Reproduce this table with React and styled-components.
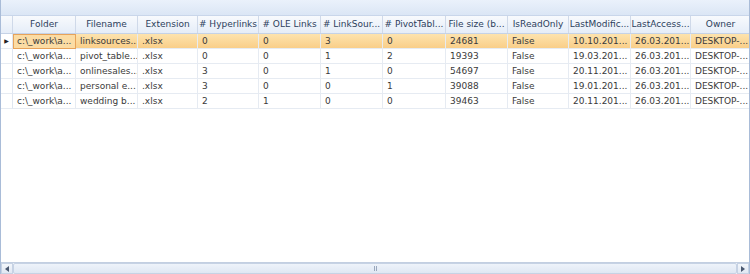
import React from 'react'
import styled, { createGlobalStyle } from 'styled-components'

const GlobalStyle = createGlobalStyle`
  html, body { margin: 0; padding: 0; background: #fff; }
  body { font-family: "DejaVu Sans", Tahoma, sans-serif; }
`

const COLS = '12px 63px 62px 60px 61px 62px 62px 63px 62px 61px 62px 60px 60px'

const Grid = styled.div`
  width: 750px;
  height: 274px;
  box-sizing: border-box;
  display: flex;
  flex-direction: column;
  border-left: 1px solid #a9bcd8;
  border-right: 1px solid #a9bcd8;
  overflow: hidden;
`

const GroupPanel = styled.div`
  height: 16px;
  flex: none;
  background: linear-gradient(#eaf1fb, #dbe6f5);
  border-bottom: 1px solid #c9d6ea;
  box-sizing: border-box;
`

const HeaderRow = styled.div`
  display: grid;
  grid-template-columns: ${COLS};
  height: 18px;
  flex: none;
  background: linear-gradient(#f8fafd, #e5edf8);
  border-bottom: 1px solid #c5d2e6;
  box-sizing: border-box;
`

const HeaderCell = styled.div`
  font-size: 9px;
  color: #2c3e5c;
  line-height: 17px;
  text-align: center;
  white-space: nowrap;
  overflow: hidden;
  border-right: 1px solid #cfd9e9;
  box-sizing: border-box;
`

const Body = styled.div`
  flex: 1;
  background: #fff;
`

const Row = styled.div`
  display: grid;
  grid-template-columns: ${COLS};
  height: 15px;
  background: ${p => (p.$selected ? 'linear-gradient(#fde3ae, #f9cd86)' : '#fff')};
`

const Indicator = styled.div`
  border-right: 1px solid #dfe6f0;
  border-bottom: 1px solid #e6ebf2;
  background: #fff;
  box-sizing: border-box;
  font-size: 6px;
  line-height: 14px;
  text-align: center;
  color: #222;
`

const Cell = styled.div`
  font-size: 9px;
  color: #3a3a3a;
  line-height: 14px;
  padding-left: 4px;
  white-space: nowrap;
  overflow: hidden;
  box-sizing: border-box;
  border-right: 1px solid #e6ebf2;
  border-bottom: 1px solid #e6ebf2;
  ${p => p.$focused && `
    border: 1px solid #e7a35a;
    background: #fbdca4;
    padding-left: 3px;
    line-height: 12px;
  `}
`

const ScrollBar = styled.div`
  height: 12px;
  flex: none;
  display: flex;
  background: #eef2f8;
  border-top: 1px solid #c3cfe1;
  box-sizing: border-box;
`

const ArrowButton = styled.div`
  width: 12px;
  flex: none;
  display: flex;
  align-items: center;
  justify-content: center;
  background: linear-gradient(#f3f6fb, #e1e8f3);
  border: 1px solid #c6d2e4;
  box-sizing: border-box;
`

const Thumb = styled.div`
  flex: 1;
  display: flex;
  align-items: center;
  justify-content: center;
  background: linear-gradient(#eef3fa, #dfe7f3);
  border: 1px solid #c6d2e4;
  border-radius: 2px;
  box-sizing: border-box;
`

const Grip = styled.div`
  width: 3px;
  height: 5px;
  background: repeating-linear-gradient(90deg, #9aa8bd 0 1px, transparent 1px 2px);
`

const headers = [
  'Folder', 'Filename', 'Extension', '# Hyperlinks', '# OLE Links', '#  LinkSour...',
  '#  PivotTabl...', 'File size (b...', 'IsReadOnly', 'LastModific...', 'LastAccess...', 'Owner',
]

const rows = [
  ['c:\\_work\\a...', 'linksources...', '.xlsx', '0', '0', '3', '0', '24681', 'False', '10.10.201...', '26.03.201...', 'DESKTOP-...'],
  ['c:\\_work\\a...', 'pivot_table...', '.xlsx', '0', '0', '1', '2', '19393', 'False', '19.03.201...', '26.03.201...', 'DESKTOP-...'],
  ['c:\\_work\\a...', 'onlinesales...', '.xlsx', '3', '0', '1', '0', '54697', 'False', '20.11.201...', '26.03.201...', 'DESKTOP-...'],
  ['c:\\_work\\a...', 'personal e...', '.xlsx', '3', '0', '0', '1', '39088', 'False', '19.01.201...', '26.03.201...', 'DESKTOP-...'],
  ['c:\\_work\\a...', 'wedding b...', '.xlsx', '2', '1', '0', '0', '39463', 'False', '20.11.201...', '26.03.201...', 'DESKTOP-...'],
]

const Arrow = ({ dir }) => (
  <svg width="4" height="6" viewBox="0 0 4 6">
    {dir === 'left'
      ? <polygon points="4,0 4,6 0,3" fill="#4a5870" />
      : <polygon points="0,0 0,6 4,3" fill="#4a5870" />}
  </svg>
)

const App = () => (
  <>
    <GlobalStyle />
    <Grid>
      <GroupPanel />
      <HeaderRow>
        <HeaderCell />
        {headers.map(h => (
          <HeaderCell key={h}>{h}</HeaderCell>
        ))}
      </HeaderRow>
      <Body>
        {rows.map((r, i) => (
          <Row key={i} $selected={i === 0}>
            <Indicator>{i === 0 ? '▶' : ''}</Indicator>
            {r.map((v, j) => (
              <Cell key={j} $focused={i === 0 && j === 0}>{v}</Cell>
            ))}
          </Row>
        ))}
      </Body>
      <ScrollBar>
        <ArrowButton><Arrow dir="left" /></ArrowButton>
        <Thumb><Grip /></Thumb>
        <ArrowButton><Arrow dir="right" /></ArrowButton>
      </ScrollBar>
    </Grid>
  </>
)

export default App
